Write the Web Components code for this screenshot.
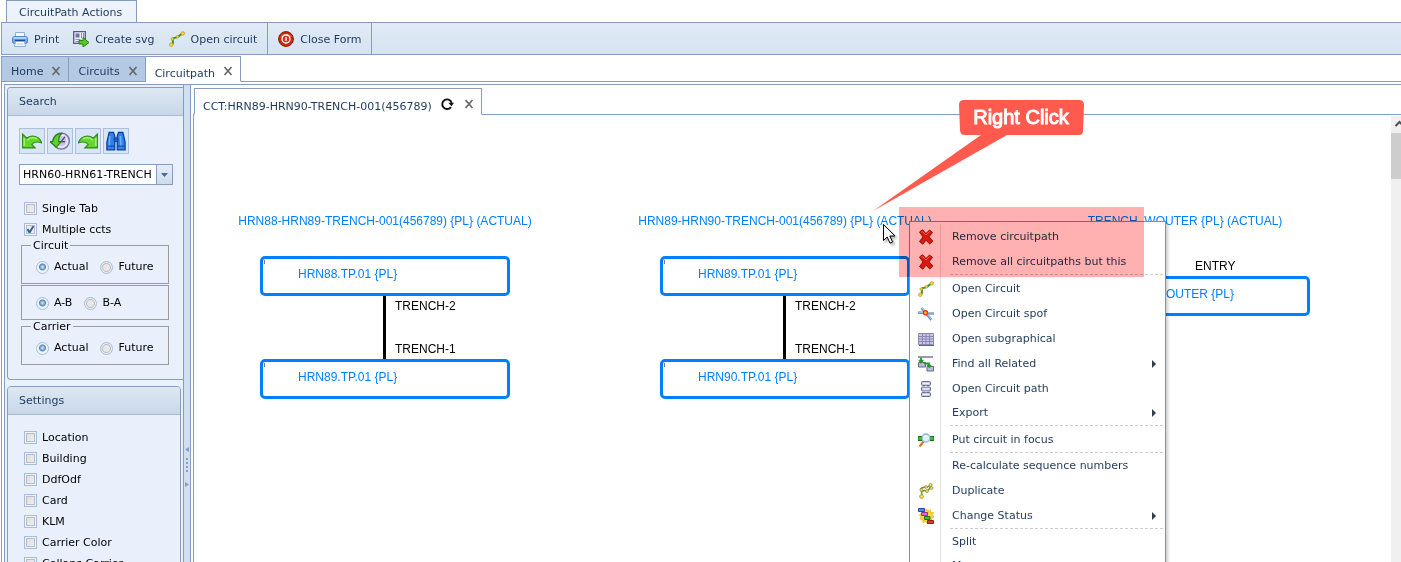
<!DOCTYPE html>
<html lang="en">

<head>
    <meta charset="UTF-8">
    <meta name="viewport" content="width=device-width, initial-scale=1.0">
    <title>Circuitpath</title>
    <style>
        :root {
            --line: #859ebf;
            --ink: #1e395b;
            --soft: #eaf0fb;
            --blue: #0080ff;
            --icon: 16px;
        }
        html, body {
            height: 100%;
            margin: 0;
            overflow: hidden;
        }
        body {
            font: 11px/16px "DejaVu Sans", Verdana, sans-serif;
            color: var(--ink);
            background: #fff;
        }
    </style>
</head>

<body>
    <app-shell>
        <ribbon-bar slot="ribbon" heading="CircuitPath Actions">
            <ribbon-group>
                <tool-button icon="print">Print</tool-button>
                <tool-button icon="svg">Create svg</tool-button>
                <tool-button icon="circuit">Open circuit</tool-button>
            </ribbon-group>
            <ribbon-group>
                <tool-button icon="power">Close Form</tool-button>
            </ribbon-group>
        </ribbon-bar>

        <page-tab slot="tabs">Home</page-tab>
        <page-tab slot="tabs">Circuits</page-tab>
        <page-tab slot="tabs" active>Circuitpath</page-tab>

        <side-panel slot="side" heading="Search" flush>
            <search-tools></search-tools>
            <check-list>
                <check-field>Single Tab</check-field>
                <check-field checked>Multiple ccts</check-field>
            </check-list>
            <option-group heading="Circuit" options="Actual,Future"></option-group>
            <option-group options="A-B,B-A"></option-group>
            <option-group heading="Carrier" options="Actual,Future"></option-group>
        </side-panel>
        <side-panel slot="side" heading="Settings">
            <check-list roomy>
                <check-field>Location</check-field>
                <check-field>Building</check-field>
                <check-field>DdfOdf</check-field>
                <check-field>Card</check-field>
                <check-field>KLM</check-field>
                <check-field>Carrier Color</check-field>
                <check-field>Collaps Carrier</check-field>
            </check-list>
        </side-panel>

        <page-tab slot="document" active refresh>CCT:HRN89-HRN90-TRENCH-001(456789)</page-tab>

        <circuit-canvas>
            <circuit-path style="--x: 66px" heading="HRN88-HRN89-TRENCH-001(456789) {PL} (ACTUAL)">
                <circuit-node>HRN88.TP.01 {PL}</circuit-node>
                <circuit-link from="TRENCH-2" to="TRENCH-1"></circuit-link>
                <circuit-node>HRN89.TP.01 {PL}</circuit-node>
            </circuit-path>
            <circuit-path style="--x: 466px" heading="HRN89-HRN90-TRENCH-001(456789) {PL} (ACTUAL)">
                <circuit-node>HRN89.TP.01 {PL}</circuit-node>
                <circuit-link from="TRENCH-2" to="TRENCH-1"></circuit-link>
                <circuit-node>HRN90.TP.01 {PL}</circuit-node>
            </circuit-path>
            <circuit-path style="--x: 866px" heading="TRENCH_WOUTER {PL} (ACTUAL)" entry="ENTRY">
                <circuit-node>TRENCH_WOUTER {PL}</circuit-node>
            </circuit-path>

            <context-menu>
                <menu-entry icon="remove">Remove circuitpath</menu-entry>
                <menu-entry icon="remove">Remove all circuitpaths but this</menu-entry>
                <menu-line></menu-line>
                <menu-entry icon="circuit">Open Circuit</menu-entry>
                <menu-entry icon="spof">Open Circuit spof</menu-entry>
                <menu-entry icon="grid">Open subgraphical</menu-entry>
                <menu-entry icon="related" more>Find all Related</menu-entry>
                <menu-entry icon="stack">Open Circuit path</menu-entry>
                <menu-entry more>Export</menu-entry>
                <menu-line></menu-line>
                <menu-entry icon="focus">Put circuit in focus</menu-entry>
                <menu-line></menu-line>
                <menu-entry>Re-calculate sequence numbers</menu-entry>
                <menu-entry icon="duplicate">Duplicate</menu-entry>
                <menu-entry icon="status" more>Change Status</menu-entry>
                <menu-line></menu-line>
                <menu-entry>Split</menu-entry>
                <menu-entry>Merge</menu-entry>
            </context-menu>
            <mark-area></mark-area>
            <mouse-pointer></mouse-pointer>
            <call-out>Right Click</call-out>
        </circuit-canvas>
    </app-shell>

    <script>
        // 16x16 drawings, looked up by name
        const icons = {
            print: `
                <path d="M3.5 1.5h9v5h-9z" fill="#f4f8ff" stroke="#8fabd6"/>
                <rect x=".5" y="5.500" width="15" height="7" rx="2" fill="#6aa2ec" stroke="#4f87d8"/>
                <path d="M1.500 7h13" stroke="#c4defc" stroke-width="1.500"/>
                <path d="M3 9.500h10" stroke="#1c4da0" stroke-width="1.500"/>
                <path d="M3.500 10.500h9l1 5h-11z" fill="#fff" stroke="#8fabd6"/>
                <path d="M4.500 13h7" stroke="#a9c4e9"/>`,
            svg: `
                <path d="M.7.700h11.600v11.600H.7z" fill="#f0edfb" stroke="#55558f" stroke-width="1.300"/>
                <path d="M2.500 2.500h4v4h-4z" fill="#73739f"/><path d="M8.500 2v5M10.500 2v6M2.500 8.500h5M2.500 10.500h4" stroke="#8c8cba"/>
                <path d="M6 9.500h4V6.500l6 5-6 4.500v-3H6z" fill="#55c928" stroke="#24810c"/>`,
            circuit: `
                <path d="M2.500 13.500c3-1 .5-3.500 1.500-6 1-1.500 4 0 5.500-2C11 3.800 12 3 14 2.500" fill="none" stroke="#2f9a38" stroke-width="2"/>
                <g fill="#ffd33c" stroke="#c8921c" stroke-width=".7">
                    <circle cx="2.300" cy="13.700" r="1.800"/><circle cx="3.300" cy="8" r="1.300"/>
                    <circle cx="8.500" cy="5.700" r="1.300"/><circle cx="13.800" cy="2.400" r="1.800"/>
                </g>`,
            power: `
                <circle cx="8" cy="8" r="7.400" fill="#ce2a12" stroke="#8d1607"/>
                <path d="M2.500 6a6 5 0 0 1 11 0" fill="#f07457"/>
                <circle cx="8" cy="8" r="4" fill="#d8321a" stroke="#fff" stroke-width="1.300"/>
                <path d="M8 6v4" stroke="#fff" stroke-width="1.400"/>`,
            undo: `
                <path d="M.5 2.500v11h10L7.800 10.800C9.500 8.800 12 8.200 15.800 9.500 14 4 8 2.500 3.800 5.800z" fill="#62d62c" stroke="#2b8716" stroke-width=".9"/>
                <path d="M1.700 5.500v6.500M4 7.500C6.500 5 9.500 5 12 6.300" fill="none" stroke="#b8f58f"/>`,
            redo: `
                <path d="M15.500 2.500v11h-10l2.700-2.700C6.500 8.800 4 8.200.2 9.500 2 4 8 2.500 12.200 5.800z" fill="#62d62c" stroke="#2b8716" stroke-width=".9"/>
                <path d="M14.300 5.500v6.500M12 7.500C9.500 5 6.500 5 4 6.300" fill="none" stroke="#b8f58f"/>`,
            history: `
                <circle cx="9" cy="8" r="6.500" fill="#c9c4e8" stroke="#77739f"/>
                <circle cx="9" cy="8" r="4.800" fill="none" stroke="#f2f0fc"/>
                <path d="M9 8.500l3-4M9 8.500h3" stroke="#555080" stroke-width="1.200"/>
                <path d="M0 8.500h2C3 4 5.500 2 9.500 2 7.500 3.500 6.800 5.500 7 8.500h2L5 13z" fill="#5dd12d" stroke="#237c12" stroke-width=".9"/>`,
            find: `
                <path d="M2.500 1h3.500l1 3v11H.7V9zM13.500 1H10L9 4v11h6.300V9z" fill="#2f82ea" stroke="#0b3f99"/>
                <path d="M6.500 5.500h3v3h-3z" fill="#1f5fc0" stroke="#0b3f99" stroke-width=".7"/>
                <path d="M3 4L2.500 13M11.500 4l.5 9" stroke="#6fb0fa" stroke-width="1.300"/>
                <path d="M1 12h6M9 12h6" stroke="#0d4cae"/>`,
            remove: `
                <path d="M1.500 3L4.500.8 8 4.500 11.500 1l3 2.500-3.500 4.300 3.800 4.300-3 2.900L8 11.300l-3.300 3.900-3.200-2.700L5 8z" fill="#dc2113" stroke="#8d160e"/>
                <path d="M3 3.500l1.500-1L8 6l3.500-3.500" fill="none" stroke="#ff8169"/>`,
            spof: `
                <path d="M0 6.500l16 1M3.500 2l10 12" stroke="#6f8fbb" stroke-width="2.500"/>
                <path d="M0 6l16 1M4 2l10 12" stroke="#b6cde9"/>
                <circle cx="7.500" cy="6.800" r="2" fill="#ffc52a" stroke="#e33a14" stroke-width="1.400"/>`,
            grid: `
                <path d="M.5 2.500h15v11H.5z" fill="#c9c6e6" stroke="#8a87b5"/>
                <path d="M.5 5.500h15M.5 8h15M.5 10.500h15M4.500 2.500v11M8 2.500v11M11.500 2.500v11" stroke="#8a87b5"/>
                <path d="M1 14.500h15" stroke="#63618f"/>`,
            related: `
                <path d="M0 1h15" stroke="#8a90a8" stroke-width="1.800"/>
                <path d="M.5 6.500h7v4.500h-7zM9 10.500h6.500v4.500H9z" fill="#b9bcd9" stroke="#656988"/>
                <path d="M3 1.500v5M1.200 4L3 6.500 5 4M6 7.500h5v3M9.500 9l1.700 2 1.800-2" fill="none" stroke="#269626" stroke-width="1.800"/>`,
            stack: `
                <g fill="#c9c8e4" stroke="#686a91"><rect x="3.500" y=".5" width="9" height="4" rx="1"/>
                <rect x="3.500" y="6" width="9" height="4" rx="1"/><rect x="3.500" y="11.500" width="9" height="4" rx="1"/></g>
                <path d="M8 4.500V6M8 10v1.500M5 2.500h6M5 8h6M5 13.500h6" stroke="#f4f4ff"/>`,
            focus: `
                <path d="M0 4.500h4v4H0zM12 4.500h4v4h-4z" fill="#3fb72f" stroke="#1b7214"/>
                <path d="M5.500 9.500l-4 5" stroke="#c77a2e" stroke-width="2.200"/>
                <circle cx="8" cy="6" r="4" fill="#d8f1fc" stroke="#8fb6cf" stroke-width="1.300"/>
                <path d="M6 5.500A2 2 0 0 1 8.500 4" stroke="#fff" fill="none"/>`,
            duplicate: `
                <path d="M3 14.500c2.500-1-1-5 1.500-6.500 3-1.500 3 1 5.500-.5 1.500-1 1.500-3 3.500-5M4 10l-1.500-4c3-3 5-1 7-2l4-2.500" fill="none" stroke="#4b9840" stroke-width="1.400"/>
                <g fill="#f5da6b" stroke="#a28524" stroke-width=".7"><circle cx="3.500" cy="13.500" r="1.900"/><circle cx="3.500" cy="7" r="1.500"/>
                <circle cx="8" cy="4" r="1.400"/><circle cx="9" cy="8" r="1.500"/><circle cx="13.500" cy="5" r="1.500"/><circle cx="12.500" cy="2" r="1.500"/></g>`,
            status: `
                <path d="M8.500 1l1.500 2 2.500-1.300.3 2.600 2.700.3-1 2.400 1.500 2-2.500 1.500.5 3-3-.5-1.500 2.500-2-2-2.500 1-.5-3-2.500-.5L3 9 1.500 6.500 4 5z" fill="#ffd52e" stroke="#e8b020" stroke-width=".7"/>
                <g stroke-width=".9"><path d="M.5.500h6v3h-6z" fill="#4c8bea" stroke="#1b408f"/><path d="M3.500 4.500h6v3h-6z" fill="#de65db" stroke="#922793"/>
                <path d="M6.500 8.500h5.500v3H6.500z" fill="#45ba3f" stroke="#166b18"/><path d="M9.500 12.500h6v3h-6z" fill="#e2332c" stroke="#8b120d"/></g>`,
            refresh: `
                <path d="M12.500 11.500A5.500 5.500 0 1 1 13.300 6.500" fill="none" stroke="#111" stroke-width="2.200"/>
                <path d="M9.500 6.500h6.500l-2.800 4z" fill="#111"/>`,
            close: `<path d="M4 3.500l8 9M12 3.500l-8 9" stroke="#666" stroke-width="1.900"/>`
        };

        // every element below gets an open shadow root filled from render()
        class BaseElement extends HTMLElement {
            constructor() {
                super();
                this.attachShadow({ mode: "open" });
            }
            connectedCallback() {
                this.shadowRoot.innerHTML = `
                    <style>
                        *, ::before, ::after {
                            box-sizing: border-box;
                        }
                        :host {
                            display: block;
                            box-sizing: border-box;
                        }
                        button {
                            font: inherit;
                            color: inherit;
                            margin: 0;
                            padding: 0;
                            border: 0;
                            background: none;
                        }
                    </style>
                    ${this.render()}
                `;
            }
            attr(name) {
                return this.getAttribute(name) || '';
            }
        }

        const define = (name, render) => {
            customElements.define(name, class extends BaseElement {
                render() {
                    return render(this);
                }
            });
        };

        define('sys-icon', el => `
            <style>
                :host { flex: none; width: var(--icon); height: var(--icon); }
                svg { display: block; width: 100%; height: 100%; }
            </style>
            <svg viewBox="0 0 16 16" aria-hidden="true">${icons[el.attr('name')] || ''}</svg>
        `);

        define('app-shell', () => `
            <style>
                :host {
                    display: flex;
                    flex-direction: column;
                    height: 100vh;
                    padding-left: 1px;
                }
                .tabs {
                    display: flex;
                    flex: none;
                    height: 26px;
                    margin-top: 1px;
                    border-left: 1px solid var(--line);
                    box-shadow: inset 0 -1px var(--line);
                }
                .main {
                    display: flex;
                    flex: 1;
                    min-height: 0;
                    border-left: 1px solid var(--line);
                    padding: 2px 0 0 2px;
                }
                aside {
                    flex: none;
                    width: 179px;
                    overflow: hidden;
                    border: solid var(--line);
                    border-width: 1px 0 0 1px;
                    padding: 2px 0 0 2px;
                    background: #e9f2fc;
                }
                .splitter {
                    display: flex;
                    flex: none;
                    justify-content: center;
                    width: 8px;
                    padding-top: 362px;
                    border: 1px solid var(--line);
                    border-bottom: 0;
                    background: #d0dff1;
                }
                .splitter svg { display: block; flex: none; }
                .content {
                    display: flex;
                    flex: 1;
                    flex-direction: column;
                    min-width: 0;
                    border-top: 1px solid var(--line);
                    padding: 3px 0 0 2px;
                }
                .documents {
                    display: flex;
                    flex: none;
                    height: 27px;
                    padding-left: 1px;
                    box-shadow: inset 0 -1px var(--line);
                }
                .sheet {
                    display: flex;
                    flex: 1;
                    min-height: 0;
                    border-left: 1px solid var(--line);
                }
                ::slotted(circuit-canvas) { flex: 1; }
                .scroll {
                    flex: none;
                    width: 10px;
                    margin-top: 1px;
                    overflow: hidden;
                    background: #f0f0f0;
                }
                .scroll svg { display: block; }
                .thumb { height: 46px; background: #cdcdcd; }
            </style>
            <slot name="ribbon"></slot>
            <nav class="tabs"><slot name="tabs"></slot></nav>
            <div class="main">
                <aside><slot name="side"></slot></aside>
                <div class="splitter">
                    <svg width="4" height="42" fill="#839fc7">
                        <path d="M4 0v5L0 2.500zM0 35v5l4-2.500zM1 11h2v2H1zM1 15h2v2H1zM1 19h2v2H1zM1 23h2v2H1z"/>
                    </svg>
                </div>
                <section class="content">
                    <div class="documents"><slot name="document"></slot></div>
                    <div class="sheet">
                        <slot></slot>
                        <div class="scroll">
                            <svg width="17" height="17"><path d="M4.500 10L8.500 6l4 4" fill="none" stroke="#505050" stroke-width="2"/></svg>
                            <div class="thumb"></div>
                        </div>
                    </div>
                </section>
            </div>
        `);

        define('ribbon-bar', el => `
            <style>
                :host { flex: none; }
                .tab {
                    display: block;
                    height: 22px;
                    margin-left: 5px;
                    padding: 2px 14px 0 12px;
                    border: 1px solid var(--line);
                    border-bottom: 0;
                    background: #edf3fc;
                }
                .bar {
                    display: flex;
                    height: 33px;
                    border: 1px solid var(--line);
                    border-right: 0;
                    background: linear-gradient(#e1eaf5, #d6e3f3);
                }
            </style>
            <button class="tab">${el.attr('heading')}</button>
            <div class="bar"><slot></slot></div>
        `);

        define('ribbon-group', () => `
            <style>
                :host {
                    display: flex;
                    gap: 14px;
                    padding: 0 10px;
                    border-right: 1px solid var(--line);
                }
            </style>
            <slot></slot>
        `);

        define('tool-button', el => `
            <style>
                :host { display: flex; }
                button { display: flex; align-items: center; gap: 6px; }
                span { padding-top: 2px; }
            </style>
            <button><sys-icon name="${el.attr('icon')}"></sys-icon><span><slot></slot></span></button>
        `);

        define('page-tab', el => `
            <style>
                :host {
                    display: flex;
                    align-items: center;
                    gap: 6px;
                    padding: 4px 5px 0 9px;
                    border: solid var(--line);
                    border-width: 1px 1px 1px 0;
                    background: #b4c9e3;
                    --icon: 14px;
                }
                :host([active]) {
                    border-bottom-color: #fff;
                    background: #fff;
                }
                :host([refresh]) {
                    gap: 8px;
                    padding-left: 8px;
                    border-left-width: 1px;
                }
                .label { padding-top: 2px; }
                :host([active]) .label { padding-top: 6px; }
                .close sys-icon, .refresh sys-icon { display: block; }
            </style>
            <button class="label"><slot></slot></button>
            ${el.hasAttribute('refresh') ? '<button class="refresh" aria-label="Refresh"><sys-icon name="refresh"></sys-icon></button>' : ''}
            <button class="close" aria-label="Close"><sys-icon name="close"></sys-icon></button>
        `);

        define('side-panel', el => `
            <style>
                :host {
                    margin: 0 2px 6px 0;
                    border: 1px solid var(--line);
                    border-radius: 4px 4px 0 0;
                    background: var(--soft);
                    overflow: hidden;
                }
                :host([flush]) {
                    margin-right: 0;
                    border-right: 0;
                    border-radius: 4px 0 0 4px;
                }
                h2 {
                    margin: 0;
                    height: 28px;
                    padding: 6px 11px 5px;
                    font: inherit;
                    border-bottom: 1px solid #a5bad5;
                    background: linear-gradient(#dde8f4, #c8d7e9);
                }
                .body { padding: 12px 11px 13px; }
            </style>
            <h2>${el.attr('heading')}</h2>
            <div class="body"><slot></slot></div>
        `);

        define('search-tools', () => `
            <style>
                .tools { display: flex; gap: 2px; margin-bottom: 10px; }
                .tools button {
                    display: grid;
                    place-items: center;
                    width: 26px;
                    height: 26px;
                    border: 1px solid #a9c0de;
                    background: #d9e5f4;
                    --icon: 20px;
                }
                select {
                    display: block;
                    appearance: none;
                    width: 154px;
                    height: 21px;
                    padding: 0 18px 0 3px;
                    font: inherit;
                    color: #000;
                    border: 1px solid var(--line);
                    border-radius: 0;
                    background:
                        linear-gradient(var(--line), var(--line)) right 15px top / 1px 100% no-repeat,
                        url("data:image/svg+xml,%3Csvg xmlns='http://www.w3.org/2000/svg' width='15' height='19'%3E%3Cpath d='M4 8h7l-3.500 4z' fill='%234b6a95'/%3E%3C/svg%3E") right top no-repeat,
                        linear-gradient(#e3edf8, #ccdcef) right top / 15px 100% no-repeat,
                        #fff;
                }
            </style>
            <div class="tools">
                <button aria-label="Previous"><sys-icon name="undo"></sys-icon></button>
                <button aria-label="History"><sys-icon name="history"></sys-icon></button>
                <button aria-label="Next"><sys-icon name="redo"></sys-icon></button>
                <button aria-label="Find"><sys-icon name="find"></sys-icon></button>
            </div>
            <select aria-label="Circuit"><option>HRN60-HRN61-TRENCH</option></select>
        `);

        define('check-list', () => `
            <style>
                :host { padding: 13px 0 0 5px; }
                :host([roomy]) { padding-top: 0; }
            </style>
            <slot></slot>
        `);

        define('check-field', el => `
            <style>
                :host { height: 21px; }
                label { display: flex; align-items: center; gap: 5px; height: 21px; color: #000; }
                input {
                    appearance: none;
                    flex: none;
                    width: 13px;
                    height: 13px;
                    margin: 0;
                    border: 1px solid #a5bedf;
                    background: linear-gradient(135deg, #dcdcdc, #f3f1f1);
                    box-shadow: inset 0 0 0 1px #f0f4fa, inset 0 0 0 2px #b9bcc2;
                }
                input:checked {
                    background: url("data:image/svg+xml,%3Csvg xmlns='http://www.w3.org/2000/svg' width='11' height='11'%3E%3Cpath d='M2.500 5l2 3.500L8.500 2' fill='none' stroke='%233a618f' stroke-width='2'/%3E%3C/svg%3E") center no-repeat, #e8edf5;
                }
            </style>
            <label><input type="checkbox" ${el.hasAttribute('checked') ? 'checked' : ''}><span><slot></slot></span></label>
        `);

        define('option-group', el => `
            <style>
                :host { padding: 0 3px 0 2px; margin-bottom: 1px; }
                fieldset {
                    display: block;
                    min-width: 0;
                    margin: 0;
                    padding: 9px 14px 8px;
                    border: 1px solid #9b9b9b;
                }
                legend { height: 10px; padding: 0 2px; margin-left: -5px; line-height: 12px; color: #000; }
                .row { display: flex; gap: 12px; }
                label { display: flex; align-items: center; gap: 5px; color: #000; }
                input {
                    appearance: none;
                    width: 13px;
                    height: 13px;
                    margin: 0;
                    border: 1px solid #a5bedf;
                    border-radius: 50%;
                    background: #e9e7e7;
                    box-shadow: inset 0 0 0 1px #f0f4fa, inset 0 0 0 2px #bbb;
                }
                input:checked {
                    background: radial-gradient(circle at 50% 45%, #b9d3f0 1px, #5580b4 3px, #eef4fb 4px);
                    box-shadow: none;
                }
            </style>
            <fieldset>
                ${el.attr('heading') ? `<legend>${el.attr('heading')}</legend>` : ''}
                <div class="row">
                    ${el.attr('options').split(',').map((text, i) => `
                        <label><input type="radio" name="option" ${i === 0 ? 'checked' : ''}>${text}</label>
                    `).join('')}
                </div>
            </fieldset>
        `);

        define('circuit-canvas', () => `
            <style>
                :host {
                    position: relative;
                    min-width: 0;
                    background: #fff;
                }
            </style>
            <slot></slot>
        `);

        define('circuit-path', el => `
            <style>
                :host {
                    position: absolute;
                    left: var(--x);
                    top: 98px;
                    width: 250px;
                    font: 12px/16px "Liberation Sans", Arial, sans-serif;
                    color: var(--blue);
                }
                .heading {
                    display: flex;
                    justify-content: center;
                    white-space: nowrap;
                    padding-bottom: 27px;
                }
                .entry { padding: 2px 0 2px 135px; color: #000; }
            </style>
            <div class="heading">${el.attr('heading')}</div>
            ${el.attr('entry') ? `<div class="entry">${el.attr('entry')}</div>` : ''}
            <slot></slot>
        `);

        define('circuit-node', () => `
            <style>
                :host {
                    height: 40px;
                    padding: 7px 35px;
                    border: 3px solid var(--blue);
                    border-radius: 5px;
                    background: linear-gradient(#777, #777) 1px 1px / 1px 4px no-repeat, #fff;
                    white-space: nowrap;
                }
            </style>
            <slot></slot>
        `);

        define('circuit-link', el => `
            <style>
                :host {
                    display: flex;
                    flex-direction: column;
                    justify-content: space-between;
                    height: 63px;
                    margin-left: 123px;
                    padding: 2px 0 2px 9px;
                    border-left: 3px solid #000;
                    color: #000;
                }
            </style>
            <span>${el.attr('from')}</span>
            <span>${el.attr('to')}</span>
        `);

        define('context-menu', () => `
            <style>
                :host {
                    position: absolute;
                    left: 715px;
                    top: 106px;
                    width: 257px;
                    padding-top: 2px;
                    border: 1px solid #8f8f8f;
                    background: linear-gradient(#e2e2e2, #e2e2e2) 30px 2px / 1px 100% no-repeat, #fff;
                    box-shadow: 2px 2px 3px rgba(0, 0, 0, .2);
                }
            </style>
            <div role="menu"><slot></slot></div>
        `);

        define('menu-entry', el => `
            <style>
                button {
                    display: flex;
                    align-items: center;
                    gap: 18px;
                    width: 100%;
                    height: ${el.attr('icon') ? 25 : 24}px;
                    padding: 0 9px 0 8px;
                    text-align: left;
                }
                span { flex: 1; }
                .more { border: 4px solid transparent; border-left-color: #2f3c52; border-right: 0; }
            </style>
            <button role="menuitem">
                <sys-icon name="${el.attr('icon')}"></sys-icon>
                <span><slot></slot></span>
                ${el.hasAttribute('more') ? '<i class="more"></i>' : ''}
            </button>
        `);

        define('menu-line', () => `
            <style>
                :host {
                    height: 2px;
                    margin: 0 2px 0 40px;
                    background: repeating-linear-gradient(90deg, #ccc 0 3px, transparent 3px 5px) top / 100% 1px no-repeat;
                }
            </style>
        `);

        // translucent marker over the first two entries
        define('mark-area', () => `
            <style>
                :host {
                    position: absolute;
                    left: 705px;
                    top: 92px;
                    width: 245px;
                    height: 70px;
                    background: #ffb0b0;
                    mix-blend-mode: multiply;
                }
            </style>
        `);

        define('mouse-pointer', () => `
            <style>
                :host { position: absolute; left: 689px; top: 109px; }
                svg { display: block; filter: drop-shadow(2px 2px 1px rgba(0, 0, 0, .3)); }
            </style>
            <svg width="14" height="21"><path d="M.5.500v16l3.700-3.500 2.800 6.200 2.600-1.200-2.800-6h5.200z" fill="#fff" stroke="#000"/></svg>
        `);

        define('call-out', () => `
            <style>
                :host { position: absolute; left: 679px; top: -15px; width: 212px; }
                svg { display: block; }
                .label {
                    position: absolute;
                    top: 0;
                    right: 0;
                    width: 128px;
                    font: 20px/34px "Liberation Sans", Arial, sans-serif;
                    -webkit-text-stroke: 1px #fff;
                    text-align: center;
                    color: #fff;
                }
            </style>
            <svg width="212" height="112" fill="#ff5a4d">
                <path d="M91 0h115q5 0 5 5l-1 26q0 4-4 4H134L0 111l108-76H92q-5 0-5-5L86 5q0-5 5-5z"/>
            </svg>
            <div class="label"><slot></slot></div>
        `);
    </script>
</body>

</html>
